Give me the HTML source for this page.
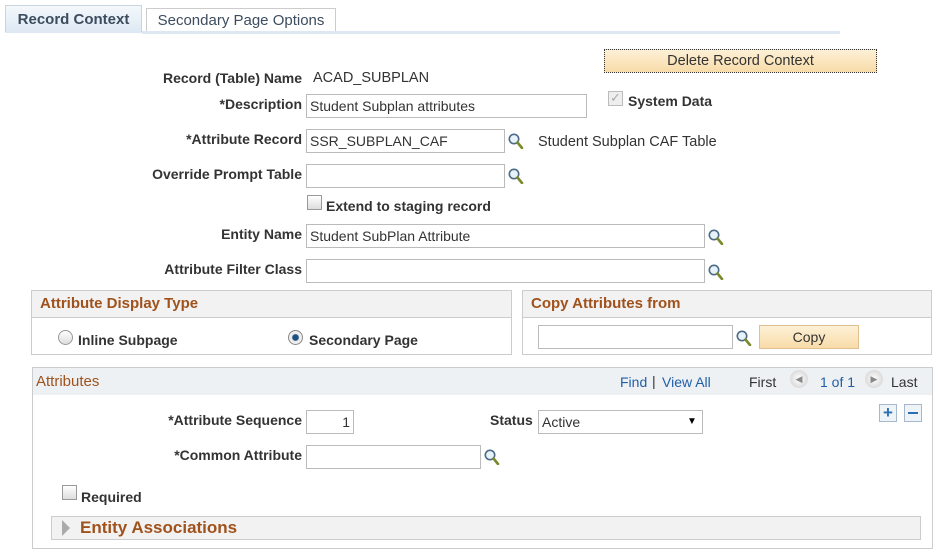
<!DOCTYPE html>
<html><head><style>
body{margin:0;width:939px;height:555px;background:#fff;font-family:"Liberation Sans",sans-serif;font-size:14px;color:#333;position:relative;overflow:hidden}
.a{position:absolute;white-space:nowrap}
.lb{position:absolute;font-weight:bold;text-align:right;white-space:nowrap;color:#333}
.in{position:absolute;border:1px solid #bbb;background:#fff;box-sizing:border-box;height:24px;padding:3px 3px;font-size:14px}
.cb{position:absolute;width:15px;height:15px;border:1px solid #999;background:linear-gradient(#fff,#ddd);box-sizing:border-box}
.box{position:absolute;border:1px solid #ccc;box-sizing:border-box}
.hd{position:absolute;left:0;right:0;top:0;height:27px;background:#f2f2f2;border-bottom:1px solid #ccc;color:#a0521c;font-weight:bold;font-size:15px;padding:4px 8px;box-sizing:border-box}
.lk{color:#1f5fa8}
</style></head><body>
<svg width="0" height="0" style="position:absolute"><defs><g id="mg"><circle cx="6" cy="6" r="4.7" fill="#e8f2fb" stroke="#4d6b86" stroke-width="1.6"/><line x1="9.5" y1="9.5" x2="14" y2="15" stroke="#7a8a2a" stroke-width="2.6" stroke-linecap="round"/></g></defs></svg>

<div class="a" style="left:5px;top:5px;width:137px;height:28px;background:linear-gradient(#f4f8fc,#dde8f3);border:1px solid #c8d4e0;border-bottom:none;box-sizing:border-box;font-weight:bold;font-size:15px;color:#3d4c5e;text-align:center;line-height:28px">Record Context</div>
<div class="a" style="left:146px;top:8px;width:190px;height:25px;background:#fff;border:1px solid #ccc;border-bottom:none;box-sizing:border-box;font-size:15px;color:#3d4c5e;text-align:center;line-height:24px">Secondary Page Options</div>
<div class="a" style="left:142px;top:31px;width:698px;height:3px;background:#dde8f3"></div>
<div class="a" style="left:5px;top:32px;width:137px;height:1px;background:#dde8f3"></div>

<div class="a" style="left:604px;top:49px;width:273px;height:24px;background:linear-gradient(#fdf0d6,#f8dca8);border:1px dotted #333;box-sizing:border-box;text-align:center;line-height:22px;font-size:14.5px">Delete Record Context</div>

<div class="lb" style="right:637px;top:70px">Record (Table) Name</div>
<div class="a" style="left:313px;top:70px;font-size:14.5px">ACAD_SUBPLAN</div>

<div class="lb" style="right:637px;top:96px">*Description</div>
<div class="in" style="left:306px;top:94px;width:281px">Student Subplan attributes</div>
<div class="cb" style="left:608px;top:91px;border-color:#bbb;background:#eee"></div>
<div class="a" style="left:610px;top:90px;color:#aaa;font-size:13px">✓</div>
<div class="a" style="left:628px;top:93px;font-weight:bold">System Data</div>

<div class="lb" style="right:637px;top:131px">*Attribute Record</div>
<div class="in" style="left:306px;top:129px;width:199px">SSR_SUBPLAN_CAF</div>
<svg class="a" style="left:508px;top:133px" width="16" height="16"><use href="#mg"/></svg>
<div class="a" style="left:538px;top:134px;font-size:14.5px">Student Subplan CAF Table</div>

<div class="lb" style="right:637px;top:166px">Override Prompt Table</div>
<div class="in" style="left:306px;top:164px;width:199px"></div>
<svg class="a" style="left:508px;top:168px" width="16" height="16"><use href="#mg"/></svg>

<div class="cb" style="left:307px;top:195px"></div>
<div class="a" style="left:326px;top:198px;font-weight:bold">Extend to staging record</div>

<div class="lb" style="right:637px;top:226px">Entity Name</div>
<div class="in" style="left:306px;top:224px;width:399px">Student SubPlan Attribute</div>
<svg class="a" style="left:708px;top:229px" width="16" height="16"><use href="#mg"/></svg>

<div class="lb" style="right:637px;top:261px">Attribute Filter Class</div>
<div class="in" style="left:306px;top:259px;width:399px"></div>
<svg class="a" style="left:708px;top:264px" width="16" height="16"><use href="#mg"/></svg>

<div class="box" style="left:31px;top:290px;width:481px;height:65px"><div class="hd">Attribute Display Type</div></div>
<div class="a" style="left:58px;top:330px;width:15px;height:15px;border-radius:50%;border:1px solid #999;background:linear-gradient(#fff,#ddd);box-sizing:border-box"></div>
<div class="a" style="left:78px;top:332px;font-weight:bold">Inline Subpage</div>
<div class="a" style="left:288px;top:330px;width:15px;height:15px;border-radius:50%;border:1px solid #888;background:radial-gradient(#1d4f80 30%,#eee 42%);box-sizing:border-box"></div>
<div class="a" style="left:309px;top:332px;font-weight:bold">Secondary Page</div>

<div class="box" style="left:522px;top:290px;width:410px;height:65px"><div class="hd">Copy Attributes from</div></div>
<div class="in" style="left:538px;top:325px;width:195px"></div>
<svg class="a" style="left:736px;top:330px" width="16" height="16"><use href="#mg"/></svg>
<div class="a" style="left:759px;top:325px;width:100px;height:24px;background:linear-gradient(#fdf0d6,#f8dca8);border:1px solid #e0c090;box-sizing:border-box;text-align:center;line-height:22px">Copy</div>

<div class="box" style="left:32px;top:367px;width:901px;height:182px"><div class="hd" style="background:#eef1f3;font-weight:normal;padding-left:3px;padding-top:5px;border-bottom:none;height:27px">Attributes</div></div>
<div class="a lk" style="left:620px;top:374px">Find</div>
<div class="a" style="left:652px;top:373px;color:#333">|</div>
<div class="a lk" style="left:662px;top:374px">View All</div>
<div class="a" style="left:749px;top:374px">First</div>
<div class="a" style="left:790px;top:370px;width:18px;height:18px;border-radius:50%;background:radial-gradient(#fff,#ccc);font-size:9px;color:#888;text-align:center;line-height:18px">◀</div>
<div class="a lk" style="left:820px;top:374px">1 of 1</div>
<div class="a" style="left:865px;top:370px;width:18px;height:18px;border-radius:50%;background:radial-gradient(#fff,#ccc);font-size:9px;color:#888;text-align:center;line-height:18px">▶</div>
<div class="a" style="left:891px;top:374px">Last</div>

<div class="a" style="left:879px;top:404px;width:18px;height:18px;border:1px solid #a6b8cc;background:#eef3f8;box-sizing:border-box;color:#2a6fb5;font-weight:bold;text-align:center;line-height:15px;font-size:17px">+</div>
<div class="a" style="left:904px;top:404px;width:18px;height:18px;border:1px solid #a6b8cc;background:#eef3f8;box-sizing:border-box"><div style="position:absolute;left:3px;top:7px;width:10px;height:2px;background:#2a6fb5"></div></div>

<div class="lb" style="right:637px;top:412px">*Attribute Sequence</div>
<div class="in" style="left:306px;top:410px;width:48px;text-align:right">1</div>
<div class="lb" style="left:490px;top:412px">Status</div>
<div class="in" style="left:538px;top:410px;width:165px">Active</div>
<div class="a" style="left:687px;top:416px;font-size:10px;color:#000">▼</div>

<div class="lb" style="right:637px;top:447px">*Common Attribute</div>
<div class="in" style="left:306px;top:445px;width:175px"></div>
<svg class="a" style="left:484px;top:449px" width="16" height="16"><use href="#mg"/></svg>

<div class="cb" style="left:62px;top:485px"></div>
<div class="a" style="left:81px;top:489px;font-weight:bold">Required</div>

<div class="a" style="left:51px;top:516px;width:870px;height:24px;background:#f2f2f2;border:1px solid #ccc;box-sizing:border-box"></div>
<div class="a" style="left:62px;top:520px;width:0;height:0;border-top:8px solid transparent;border-bottom:8px solid transparent;border-left:8px solid #aaa"></div>
<div class="a" style="left:80px;top:518px;font-weight:bold;font-size:17px;color:#a0521c">Entity Associations</div>
</body></html>
